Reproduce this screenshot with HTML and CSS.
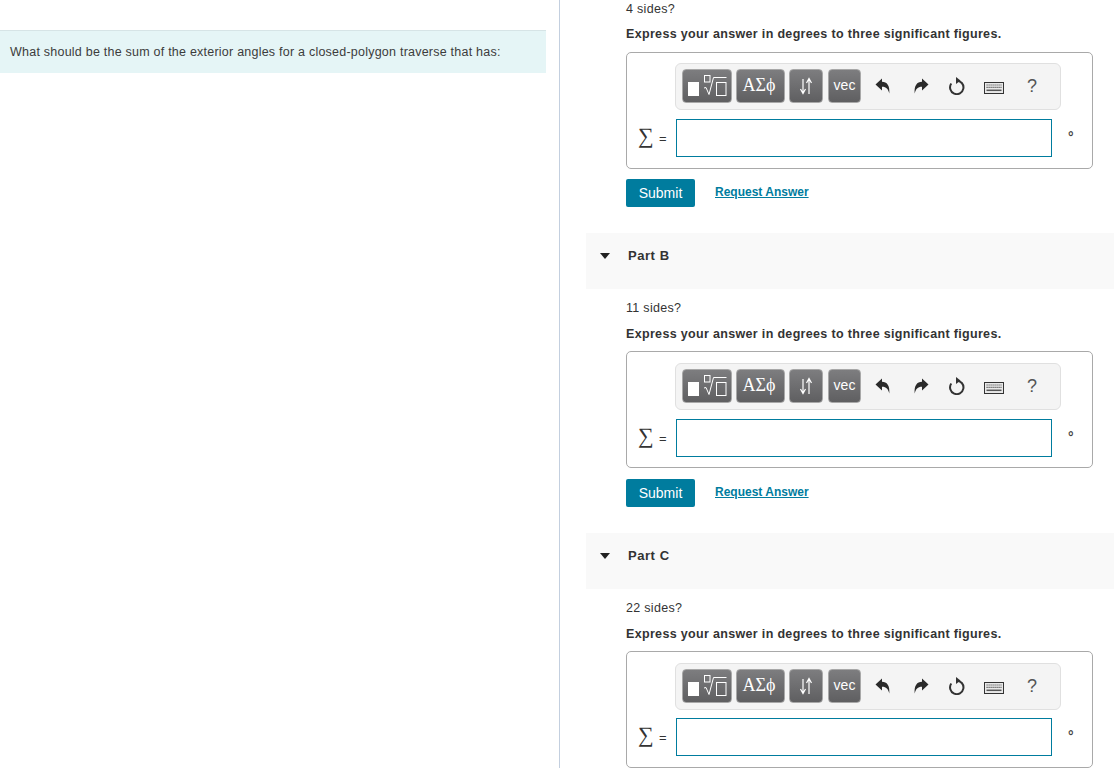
FILE: index.html
```html
<!DOCTYPE html>
<html lang="en">
<head>
<meta charset="utf-8">
<title>Traverse exterior angles</title>
<link rel="stylesheet" href="styles.css">
</head>
<body>
<svg class="defs" width="0" height="0" aria-hidden="true">
  <symbol id="i-template" viewBox="1 1 48 32">
    <rect x="6" y="13" width="11" height="14" fill="#fff"/>
    <rect x="22.500" y="6.500" width="5.500" height="6.500" fill="none" stroke="#fff" stroke-width="1"/>
    <path d="M22 19 L24 18.500 L27 25.500 L31.500 8.500 H44.500" fill="none" stroke="#fff" stroke-width="1"/>
    <rect x="34.500" y="13.500" width="9.500" height="13" fill="none" stroke="#fff" stroke-width="1"/>
  </symbol>
  <symbol id="i-arrows" viewBox="0 0 16 18">
    <path d="M5 2 V16 M2.500 12 L5 16.500 L7.500 12 M11 17 V2 M8.500 6 L11 1.500 L13.500 6" fill="none" stroke="#fff" stroke-width="1.200"/>
  </symbol>
  <symbol id="i-undo" viewBox="0 0 15 16">
    <path d="M0.500 6.500 L7 0.500 V3.700 C12 3.700 15 7.500 14.300 15.500 C13 11 11.500 8.800 7 8.800 V12.500 Z" fill="#2a2a2a"/>
  </symbol>
  <symbol id="i-redo" viewBox="0 0 15 16">
    <path d="M14.500 6.500 L8 0.500 V3.700 C3 3.700 0 7.500 0.700 15.500 C2 11 3.500 8.800 8 8.800 V12.500 Z" fill="#2a2a2a"/>
  </symbol>
  <symbol id="i-reset" viewBox="0 0 16 18">
    <path d="M7.500 3.700 A6.700 6.700 0 1 1 2.300 6.500" fill="none" stroke="#333" stroke-width="2"/>
    <path d="M7 0 L11.500 3.600 L7 7 Z" fill="#333"/>
  </symbol>
  <symbol id="i-keys" viewBox="0 0 20 12">
    <rect x="0.500" y="0.500" width="19" height="11" fill="#e8e8e8" stroke="#333"/>
    <path d="M2.500 3 H17.500 M2.500 5.300 H17.500" stroke="#555" stroke-width="1.200" stroke-dasharray="1.200 .8"/>
    <path d="M2.500 8.300 H17.500" stroke="#555" stroke-width="1.500"/>
  </symbol>
</svg>
<main class="page">
  <aside class="intro">
    <p class="intro-text">What should be the sum of the exterior angles for a closed-polygon traverse that has:</p>
  </aside>
  <section class="parts">
    <article class="part part-first">
      <p class="prompt">4 sides?</p>
      <p class="instruction">Express your answer in degrees to three significant figures.</p>
      <div class="answer-box">
        <div class="toolbar">
          <span class="tool tool-template"><svg class="svg-template"><use href="#i-template"/></svg></span>
          <span class="tool tool-greek">ΑΣϕ</span>
          <span class="tool tool-arrows"><svg class="svg-arrows"><use href="#i-arrows"/></svg></span>
          <span class="tool tool-vec">vec</span>
          <span class="actions">
            <svg class="act act-undo"><use href="#i-undo"/></svg>
            <svg class="act act-redo"><use href="#i-redo"/></svg>
            <svg class="act act-reset"><use href="#i-reset"/></svg>
            <svg class="act act-keys"><use href="#i-keys"/></svg>
            <span class="help">?</span>
          </span>
        </div>
        <div class="answer-row">
          <span class="sigma">∑</span><span class="equals">=</span>
          <span class="field"></span>
          <span class="unit">°</span>
        </div>
      </div>
      <div class="submit-row"><span class="submit">Submit</span><a class="request" href="#">Request Answer</a></div>
    </article>

    <article class="part">
      <header class="part-head"><span class="caret"></span><h2 class="part-title">Part B</h2></header>
      <p class="prompt">11 sides?</p>
      <p class="instruction">Express your answer in degrees to three significant figures.</p>
      <div class="answer-box">
        <div class="toolbar">
          <span class="tool tool-template"><svg class="svg-template"><use href="#i-template"/></svg></span>
          <span class="tool tool-greek">ΑΣϕ</span>
          <span class="tool tool-arrows"><svg class="svg-arrows"><use href="#i-arrows"/></svg></span>
          <span class="tool tool-vec">vec</span>
          <span class="actions">
            <svg class="act act-undo"><use href="#i-undo"/></svg>
            <svg class="act act-redo"><use href="#i-redo"/></svg>
            <svg class="act act-reset"><use href="#i-reset"/></svg>
            <svg class="act act-keys"><use href="#i-keys"/></svg>
            <span class="help">?</span>
          </span>
        </div>
        <div class="answer-row">
          <span class="sigma">∑</span><span class="equals">=</span>
          <span class="field"></span>
          <span class="unit">°</span>
        </div>
      </div>
      <div class="submit-row"><span class="submit">Submit</span><a class="request" href="#">Request Answer</a></div>
    </article>

    <article class="part part-last">
      <header class="part-head"><span class="caret"></span><h2 class="part-title">Part C</h2></header>
      <p class="prompt">22 sides?</p>
      <p class="instruction">Express your answer in degrees to three significant figures.</p>
      <div class="answer-box">
        <div class="toolbar">
          <span class="tool tool-template"><svg class="svg-template"><use href="#i-template"/></svg></span>
          <span class="tool tool-greek">ΑΣϕ</span>
          <span class="tool tool-arrows"><svg class="svg-arrows"><use href="#i-arrows"/></svg></span>
          <span class="tool tool-vec">vec</span>
          <span class="actions">
            <svg class="act act-undo"><use href="#i-undo"/></svg>
            <svg class="act act-redo"><use href="#i-redo"/></svg>
            <svg class="act act-reset"><use href="#i-reset"/></svg>
            <svg class="act act-keys"><use href="#i-keys"/></svg>
            <span class="help">?</span>
          </span>
        </div>
        <div class="answer-row">
          <span class="sigma">∑</span><span class="equals">=</span>
          <span class="field"></span>
          <span class="unit">°</span>
        </div>
      </div>
    </article>
  </section>
</main>
</body>
</html>
```

FILE: styles.css
```css
* { box-sizing: border-box; }
html, body { margin: 0; height: 768px; overflow: hidden; background: #fff; }
body { font-family: "Liberation Sans", Arial, sans-serif; color: #333; font-size: 12.5px; }
.defs { display: block; height: 0; }
.page { display: flex; height: 768px; overflow: hidden; }

.intro { width: 560px; flex: none; height: 768px; padding-top: 30px; border-right: 1px solid #c3cfdf; }
.intro-text { width: 546px; height: 43px; margin: 0; padding: 0 0 0 10px; line-height: 42px; font-size: 12.500px; letter-spacing: .23px; color: #3c3c3c; background: #e5f5f6; border-top: 1px solid #d6e4e6; }

.parts { flex: 1; padding-left: 26px; min-width: 0; }
.part { height: 300px; }
.part-first { height: 233px; }

.part-head { display: flex; align-items: center; height: 56px; padding: 0 0 11px 14px; background: #f9f9f9; }
.caret { width: 0; height: 0; border: 5.500px solid transparent; border-top: 6px solid #222; border-bottom: 0; margin-right: 18px; }
.part-title { margin: 0; font-size: 13px; font-weight: 700; color: #333; letter-spacing: .55px; }

.prompt, .instruction { margin: 0 0 0 40px; line-height: 16px; font-size: 12.500px; }
.prompt { padding-top: 11px; margin-bottom: 10px; letter-spacing: .3px; }
.part-first .prompt { padding-top: 1px; margin-bottom: 9px; }
.instruction { font-weight: 700; letter-spacing: .33px; margin-bottom: 9px; }
.part-first .instruction { margin-bottom: 10px; }

.answer-box { margin-left: 40px; width: 467px; height: 117px; border: 1px solid #a9a9a9; border-radius: 5px; padding: 11px 0 0 48px; }
.part-first .answer-box { padding-top: 10px; }
.toolbar { display: flex; align-items: flex-start; gap: 4px; width: 386px; height: 47px; padding: 5px 0 0 6px; background: #f4f4f4; border: 1px solid #e0e0e0; border-radius: 6px; }
.tool { display: flex; align-items: center; justify-content: center; height: 34px; color: #fff; border: 1px solid #a8a8a8; border-radius: 4px; background: linear-gradient(#7d7d7f, #5f5f61); }
.tool-template { width: 50px; }
.tool-greek { width: 49px; font-family: "Liberation Serif", serif; font-size: 18px; padding: 0 3px 2px 0; }
.tool-arrows { width: 34px; }
.tool-vec { width: 33px; font-size: 14px; padding-bottom: 3px; margin-left: 1px; }
.svg-template { display: block; width: 48px; height: 32px; }
.svg-arrows { width: 16px; height: 18px; }
.actions { display: flex; align-items: center; height: 34px; margin-left: 10px; }
.act { flex: none; }
.act-undo { width: 15px; height: 16px; margin-right: 24px; }
.act-redo { width: 15px; height: 16px; margin-right: 20px; }
.act-reset { width: 16px; height: 18px; margin-right: 19px; }
.act-keys { width: 20px; height: 12px; margin: 4px 23px 0 0; }
.help { font-size: 18px; color: #555; }

.answer-row { display: flex; align-items: center; height: 38px; margin-top: 9px; margin-left: -37px; }
.part-last .answer-row { margin-top: 8px; }
.sigma { width: 17px; height: 24px; font-family: "Liberation Serif", "DejaVu Serif", serif; font-size: 22px; line-height: 20px; font-weight: 400; color: #333; }
.equals { width: 21px; font-size: 13px; padding-left: 4px; }
.field { display: block; width: 376px; height: 38px; border: 1px solid #007c9e; background: #fff; }
.unit { margin-left: 16px; font-size: 14px; font-weight: 700; color: #444; align-self: flex-start; padding-top: 10px; }

.submit-row { display: flex; align-items: flex-start; gap: 20px; margin: 11px 0 0 40px; }
.part-first .submit-row { margin-top: 10px; }
.submit { width: 69px; height: 28px; line-height: 28px; text-align: center; color: #fff; background: #007c9e; border-radius: 2px; font-size: 14px; }
.request { margin-top: 6px; color: #007c9e; font-weight: 700; font-size: 12px; text-decoration: underline; }
```
